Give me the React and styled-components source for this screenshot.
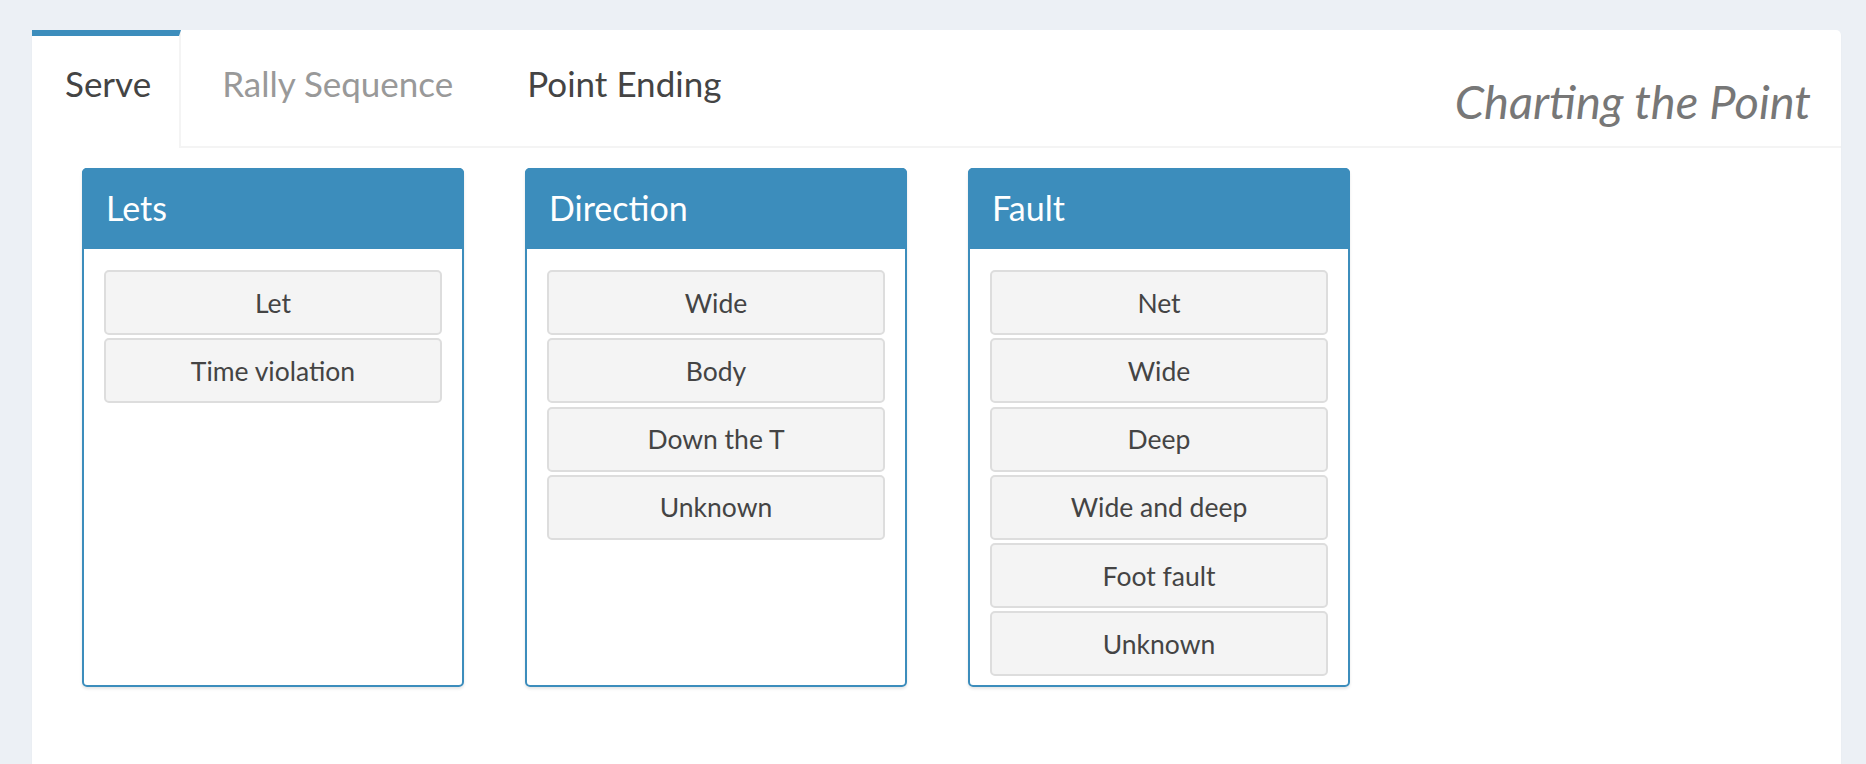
import React from 'react';
import styled, { createGlobalStyle } from 'styled-components';

const GlobalStyle = createGlobalStyle`
  html, body {
    margin: 0;
    padding: 0;
    background: #ecf0f5;
    font-family: Lato, "Noto Sans", sans-serif;
    color: #444;
    overflow: hidden;
  }
`;

const Page = styled.div`
  padding: 30px 25px 0 32px;
`;

const Card = styled.div`
  background: #fff;
  border-radius: 0 5px 0 0;
  box-shadow: 0 1px 1px rgba(0, 0, 0, 0.1);
  min-height: 760px;
`;

const TabBar = styled.div`
  display: flex;
  align-items: stretch;
  height: 116px;
  border-bottom: 2px solid #f4f4f4;
`;

const Tab = styled.div`
  box-sizing: border-box;
  padding: 26px 0 0;
  margin-right: 74px;
  border-top: 6px solid transparent;
  font-size: 35px;
  line-height: 42px;
  color: ${(p) => (p.$muted ? '#999' : '#444')};
  cursor: pointer;

  ${(p) =>
    p.$active &&
    `
    padding: 26px 28px 0 33px;
    margin-right: 41px;
    margin-bottom: -2px;
    border-top-color: #3c8dbc;
    border-right: 2px solid #f4f4f4;
    background: #fff;
  `}
`;

const Title = styled.div`
  margin-left: auto;
  padding: 44px 30px 0 0;
  font-size: 47px;
  line-height: 54px;
  font-style: italic;
  color: #777;
`;

const BoxRow = styled.div`
  display: flex;
  gap: 61px;
  padding: 20px 0 0 50px;
`;

const Box = styled.div`
  width: 382px;
  box-sizing: border-box;
  border: 2px solid #3c8dbc;
  border-radius: 5px;
  box-shadow: 0 2px 3px rgba(0, 0, 0, 0.1);
  display: flex;
  flex-direction: column;
`;

const BoxHeader = styled.div`
  height: 81px;
  box-sizing: border-box;
  margin: -2px -2px 0;
  padding: 18px 24px 0;
  background: #3c8dbc;
  border-radius: 5px 5px 0 0;
  color: #fff;
  font-size: 34px;
  line-height: 43px;
`;

const BoxBody = styled.div`
  display: flex;
  flex-direction: column;
  gap: 3.3px;
  padding: 21px 20px 9px;
`;

const OptionButton = styled.button`
  height: 65px;
  box-sizing: border-box;
  border: 2px solid #ddd;
  border-radius: 5px;
  background: #f4f4f4;
  font-family: inherit;
  font-size: 26.5px;
  color: #444;
  cursor: pointer;
`;

const groups = [
  { title: 'Lets', options: ['Let', 'Time violation'] },
  { title: 'Direction', options: ['Wide', 'Body', 'Down the T', 'Unknown'] },
  {
    title: 'Fault',
    options: ['Net', 'Wide', 'Deep', 'Wide and deep', 'Foot fault', 'Unknown'],
  },
];

export default function App() {
  return (
    <>
      <GlobalStyle />
      <Page>
        <Card>
          <TabBar>
            <Tab $active>Serve</Tab>
            <Tab $muted>Rally Sequence</Tab>
            <Tab>Point Ending</Tab>
            <Title>Charting the Point</Title>
          </TabBar>
          <BoxRow>
            {groups.map((g) => (
              <Box key={g.title}>
                <BoxHeader>{g.title}</BoxHeader>
                <BoxBody>
                  {g.options.map((o) => (
                    <OptionButton key={o}>{o}</OptionButton>
                  ))}
                </BoxBody>
              </Box>
            ))}
          </BoxRow>
        </Card>
      </Page>
    </>
  );
}
